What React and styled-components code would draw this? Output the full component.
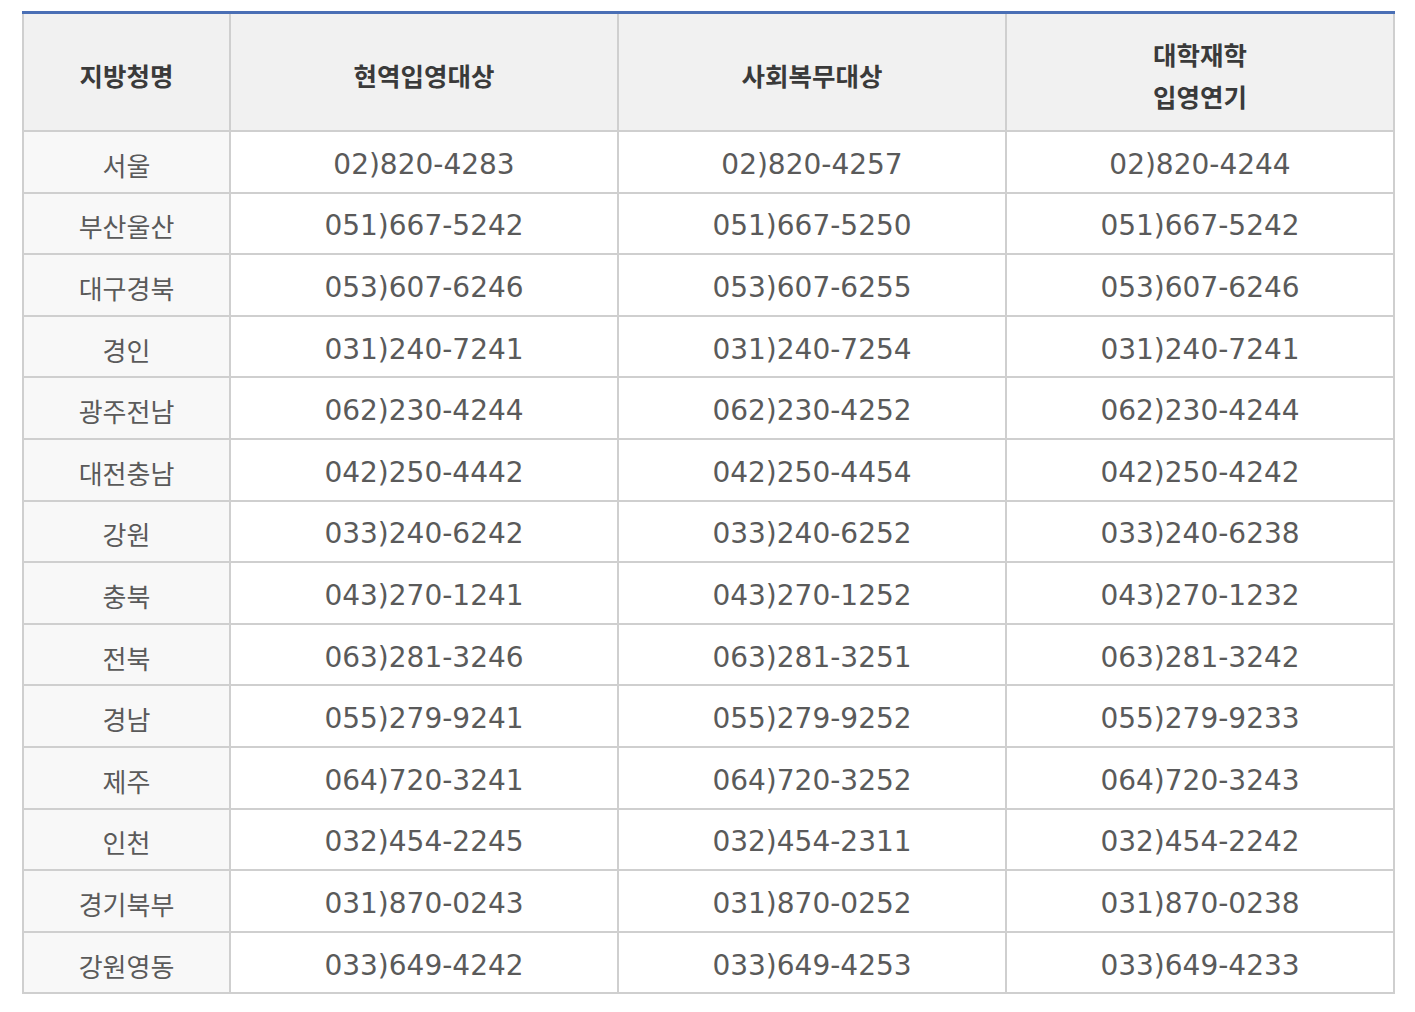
import React from "react";
import styled, { createGlobalStyle } from "styled-components";

const Global = createGlobalStyle`
  html, body { margin: 0; padding: 0; background: #fff; }
  body { font-family: "DejaVu Sans", "Noto Sans CJK KR", sans-serif; }
`;

const Page = styled.div`
  padding: 11px 0 0 22px;
`;

const Table = styled.table`
  width: 1371px;
  border-collapse: collapse;
  table-layout: fixed;
  border-bottom: 2px solid #cfcfcf;
`;

const Th = styled.th`
  height: 111px;
  padding: 5px 0 0;
  background: #f1f1f1;
  border-top: 3px solid #4a6fb5;
  border-left: 2px solid #cfcfcf;
  border-right: 2px solid #cfcfcf;
  border-bottom: 2px solid #cfcfcf;
  font-family: "Noto Sans CJK KR", sans-serif;
  font-weight: 700;
  font-size: 25.5px;
  line-height: 42px;
  color: #3a3a3a;
  text-align: center;
  vertical-align: middle;
`;

const Td = styled.td`
  height: 53.6px;
  padding: 6px 0 0;
  border: 2px solid #cfcfcf;
  background: ${(p) => (p.$label ? "#f8f8f8" : "#fff")};
  font-family: ${(p) =>
    p.$label ? `"Noto Sans CJK KR", sans-serif` : `"DejaVu Sans", sans-serif`};
  font-size: ${(p) => (p.$label ? "26px" : "28px")};
  color: #5a5a5a;
  text-align: center;
  vertical-align: middle;
  line-height: 1;
`;

const rows = [
  ["서울", "02)820-4283", "02)820-4257", "02)820-4244"],
  ["부산울산", "051)667-5242", "051)667-5250", "051)667-5242"],
  ["대구경북", "053)607-6246", "053)607-6255", "053)607-6246"],
  ["경인", "031)240-7241", "031)240-7254", "031)240-7241"],
  ["광주전남", "062)230-4244", "062)230-4252", "062)230-4244"],
  ["대전충남", "042)250-4442", "042)250-4454", "042)250-4242"],
  ["강원", "033)240-6242", "033)240-6252", "033)240-6238"],
  ["충북", "043)270-1241", "043)270-1252", "043)270-1232"],
  ["전북", "063)281-3246", "063)281-3251", "063)281-3242"],
  ["경남", "055)279-9241", "055)279-9252", "055)279-9233"],
  ["제주", "064)720-3241", "064)720-3252", "064)720-3243"],
  ["인천", "032)454-2245", "032)454-2311", "032)454-2242"],
  ["경기북부", "031)870-0243", "031)870-0252", "031)870-0238"],
  ["강원영동", "033)649-4242", "033)649-4253", "033)649-4233"],
];

export default function App() {
  return (
    <>
      <Global />
      <Page>
        <Table>
          <colgroup>
            <col style={{ width: 207 }} />
            <col style={{ width: 388 }} />
            <col style={{ width: 388 }} />
            <col style={{ width: 388 }} />
          </colgroup>
          <thead>
            <tr>
              <Th>지방청명</Th>
              <Th>현역입영대상</Th>
              <Th>사회복무대상</Th>
              <Th>
                대학재학
                <br />
                입영연기
              </Th>
            </tr>
          </thead>
          <tbody>
            {rows.map((r) => (
              <tr key={r[0]}>
                <Td $label>{r[0]}</Td>
                <Td>{r[1]}</Td>
                <Td>{r[2]}</Td>
                <Td>{r[3]}</Td>
              </tr>
            ))}
          </tbody>
        </Table>
      </Page>
    </>
  );
}
